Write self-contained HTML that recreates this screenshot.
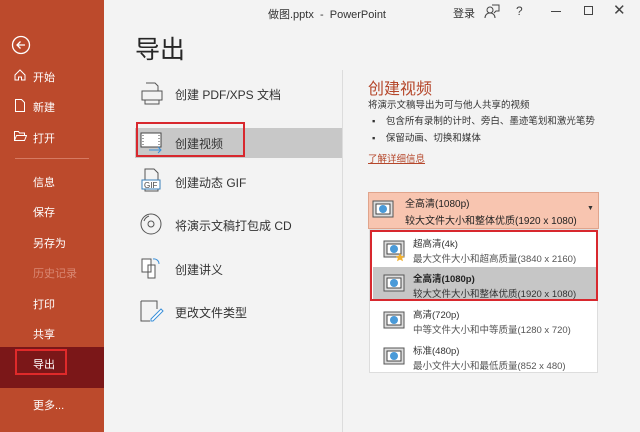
<!DOCTYPE html>
<html><head><meta charset="utf-8"><style>
*{margin:0;padding:0;box-sizing:border-box}
body{width:640px;height:432px;overflow:hidden;background:#f3f3f3;font-family:"Liberation Sans","Noto Sans CJK SC",sans-serif;position:relative;color:#262626}
.a{position:absolute;white-space:nowrap}
#side{position:absolute;left:0;top:0;width:104px;height:432px;background:#bc4a2c}
.s{position:absolute;left:33px;color:#fff;font-size:11px}
.m{position:absolute;left:175px;font-size:12px;color:#333}
.ic{position:absolute;left:139px;width:26px;height:24px}
</style></head><body>
<div id="side">
<svg class="a" style="left:11px;top:35px" width="20" height="20" viewBox="0 0 20 20"><circle cx="10" cy="10" r="8.5" fill="none" stroke="#fff" stroke-width="1.3"/><path d="M14 10H6M9.5 6.5L6 10l3.5 3.5" fill="none" stroke="#fff" stroke-width="1.3"/></svg>
<svg class="a" style="left:14px;top:69px" width="12" height="12" viewBox="0 0 12 12"><path d="M1 6L6 1l5 5v5H7.5V8h-3v3H1z" fill="none" stroke="#fff"/></svg>
<div class="s" style="top:69px">开始</div>
<svg class="a" style="left:15px;top:99px" width="10" height="13" viewBox="0 0 10 13"><path d="M.5.5h6l3 3v9h-9z" fill="none" stroke="#fff"/></svg>
<div class="s" style="top:99px">新建</div>
<svg class="a" style="left:14px;top:131px" width="13" height="10" viewBox="0 0 13 10"><path d="M.5 9.5V.5h4l1 1.5h5v2M.5 9.5l2-5h10l-2 5z" fill="none" stroke="#fff"/></svg>
<div class="s" style="top:130px">打开</div>
<div class="a" style="left:15px;top:158px;width:74px;height:1px;background:#d67a62"></div>
<div class="s" style="top:174px">信息</div>
<div class="s" style="top:204px">保存</div>
<div class="s" style="top:235px">另存为</div>
<div class="s" style="top:265px;color:#d98873">历史记录</div>
<div class="s" style="top:296px">打印</div>
<div class="s" style="top:326px">共享</div>
<div class="a" style="left:0;top:347px;width:104px;height:41px;background:#7b1718"></div>
<div class="a" style="left:15px;top:349px;width:52px;height:26px;border:2px solid #e02a2a"></div>
<div class="s" style="top:356px">导出</div>
<div class="s" style="top:397px">更多...</div>
</div>
<div class="a" style="left:268px;top:6px;font-size:11px;color:#333">做图.pptx&nbsp; -&nbsp; PowerPoint</div>
<div class="a" style="left:453px;top:5px;font-size:11px;color:#333">登录</div>
<svg class="a" style="left:484px;top:4px" width="16" height="15" viewBox="0 0 16 15"><circle cx="6" cy="6" r="3" fill="none" stroke="#444"/><path d="M1 14c0-3 2-5 5-5s5 2 5 5M8 1h7v6h-3l-2 2" fill="none" stroke="#444"/></svg>
<div class="a" style="left:516px;top:4px;font-size:12px;color:#444">?</div>
<div class="a" style="left:551px;top:11px;width:10px;height:1px;background:#444"></div>
<div class="a" style="left:584px;top:6px;width:9px;height:9px;border:1px solid #444"></div>
<div class="a" style="left:613px;top:1px;font-size:15px;color:#444">✕</div>
<div class="a" style="left:135px;top:30px;font-size:25px;color:#262626">导出</div>
<div class="a" style="left:135px;top:128px;width:207px;height:30px;background:#c8c8c8"></div>
<div class="a" style="left:136px;top:122px;width:109px;height:35px;border:2px solid #d8282e"></div>
<svg class="ic" style="top:82px" viewBox="0 0 26 24"><path d="M7 1h9l3 3v5M3 9h20v9H3zM6 18v4h14v-4" fill="none" stroke="#555"/></svg>
<div class="m" style="top:86px">创建 PDF/XPS 文档</div>
<svg class="ic" style="top:130px" viewBox="0 0 26 24"><rect x="2" y="3" width="20" height="14" fill="#fff" stroke="#444"/><path d="M4 5v10M20 5v10" stroke="#444" stroke-dasharray="1 2"/><path d="M10 20h12M19 17l3 3-3 3" fill="none" stroke="#3a8fd8"/></svg>
<div class="m" style="top:135px">创建视频</div>
<svg class="ic" style="top:168px" viewBox="0 0 26 24"><path d="M6 12V1h9l4 4v7M6 21v2h13v-2" fill="none" stroke="#555"/><rect x="3" y="12" width="18" height="9" fill="#fff" stroke="#3a7fb8"/><text x="5" y="20" font-size="8" fill="#444" font-family="Liberation Sans">GIF</text></svg>
<div class="m" style="top:174px">创建动态 GIF</div>
<svg class="ic" style="top:212px" viewBox="0 0 26 24"><circle cx="12" cy="12" r="10" fill="none" stroke="#555"/><circle cx="12" cy="12" r="3" fill="none" stroke="#555"/><path d="M5 9a8 8 0 0 1 5-5" fill="none" stroke="#555"/></svg>
<div class="m" style="top:217px">将演示文稿打包成 CD</div>
<svg class="ic" style="top:256px" viewBox="0 0 26 24"><path d="M3 3h9v13H3zM9 9h7v13H9z" fill="#fff" stroke="#555"/><path d="M14 3a5 5 0 0 1 6 5" fill="none" stroke="#3a8fd8"/></svg>
<div class="m" style="top:261px">创建讲义</div>
<svg class="ic" style="top:299px" viewBox="0 0 26 24"><path d="M2 2h16v8M2 2v20h9" fill="none" stroke="#555"/><path d="M12 20l10-10 2 2-10 10h-2z" fill="#fff" stroke="#3a8fd8"/></svg>
<div class="m" style="top:304px">更改文件类型</div>
<div class="a" style="left:342px;top:70px;width:1px;height:362px;background:#dcdcdc"></div>
<div class="a" style="left:368px;top:75px;font-size:16px;color:#b5472b">创建视频</div>
<div class="a" style="left:368px;top:97px;font-size:9.5px;color:#333">将演示文稿导出为可与他人共享的视频</div>
<div class="a" style="left:372px;top:113px;font-size:9.5px;color:#333">▪&nbsp;&nbsp;&nbsp;&nbsp;包含所有录制的计时、旁白、墨迹笔划和激光笔势</div>
<div class="a" style="left:372px;top:130px;font-size:9.5px;color:#333">▪&nbsp;&nbsp;&nbsp;&nbsp;保留动画、切换和媒体</div>
<div class="a" style="left:368px;top:151px;font-size:9.5px;color:#b5472b;text-decoration:underline">了解详细信息</div>
<div class="a" style="left:368px;top:192px;width:231px;height:37px;background:#f8c5b0;border:1px solid #e0a48c"></div>
<div class="a" style="left:405px;top:195px;font-size:10px;color:#222">全高清(1080p)</div>
<div class="a" style="left:405px;top:212px;font-size:10px;color:#222">较大文件大小和整体优质(1920 x 1080)</div>
<div class="a" style="left:587px;top:205px;font-size:7px;color:#333">▼</div>
<div class="a" style="left:369px;top:229px;width:229px;height:144px;background:#fff;border:1px solid #ddd"></div>
<div class="a" style="left:373px;top:267px;width:223px;height:32px;background:#c6c6c6"></div>
<div class="a" style="left:370px;top:230px;width:228px;height:71px;border:2px solid #d8282e"></div>
<div class="a" style="left:413px;top:236px;font-size:9.5px;color:#333">超高清(4k)</div>
<div class="a" style="left:413px;top:251px;font-size:9.5px;color:#555">最大文件大小和超高质量(3840 x 2160)</div>
<div class="a" style="left:413px;top:271px;font-size:9.5px;color:#222;font-weight:bold">全高清(1080p)</div>
<div class="a" style="left:413px;top:286px;font-size:9.5px;color:#333">较大文件大小和整体优质(1920 x 1080)</div>
<div class="a" style="left:413px;top:307px;font-size:9.5px;color:#333">高清(720p)</div>
<div class="a" style="left:413px;top:322px;font-size:9.5px;color:#555">中等文件大小和中等质量(1280 x 720)</div>
<div class="a" style="left:413px;top:343px;font-size:9.5px;color:#333">标准(480p)</div>
<div class="a" style="left:413px;top:358px;font-size:9.5px;color:#555">最小文件大小和最低质量(852 x 480)</div>
<svg class="a" style="left:372px;top:200px" width="22" height="18" viewBox="0 0 22 18"><rect x="1" y="1" width="20" height="16" fill="#ddd" stroke="#555"/><rect x="4" y="4" width="14" height="10" fill="#fff" stroke="#444"/><circle cx="11" cy="9" r="4" fill="#4a9ad8"/></svg>
<svg class="a" style="left:383px;top:240px" width="22" height="22" viewBox="0 0 22 22"><rect x="1" y="1" width="20" height="16" fill="#ddd" stroke="#555"/><rect x="4" y="4" width="14" height="10" fill="#fff" stroke="#444"/><circle cx="11" cy="9" r="4" fill="#4a9ad8"/><path d="M17 13l1.5 3 3 .3-2.3 2 .8 3-3-1.7-3 1.7.8-3-2.3-2 3-.3z" fill="#f0b030"/></svg>
<svg class="a" style="left:383px;top:274px" width="22" height="18" viewBox="0 0 22 18"><rect x="1" y="1" width="20" height="16" fill="#ddd" stroke="#555"/><rect x="4" y="4" width="14" height="10" fill="#fff" stroke="#444"/><circle cx="11" cy="9" r="4" fill="#4a9ad8"/></svg>
<svg class="a" style="left:383px;top:311px" width="22" height="18" viewBox="0 0 22 18"><rect x="1" y="1" width="20" height="16" fill="#ddd" stroke="#555"/><rect x="4" y="4" width="14" height="10" fill="#fff" stroke="#444"/><circle cx="11" cy="9" r="4" fill="#4a9ad8"/></svg>
<svg class="a" style="left:383px;top:347px" width="22" height="18" viewBox="0 0 22 18"><rect x="1" y="1" width="20" height="16" fill="#ddd" stroke="#555"/><rect x="4" y="4" width="14" height="10" fill="#fff" stroke="#444"/><circle cx="11" cy="9" r="4" fill="#4a9ad8"/></svg>
</body></html>
